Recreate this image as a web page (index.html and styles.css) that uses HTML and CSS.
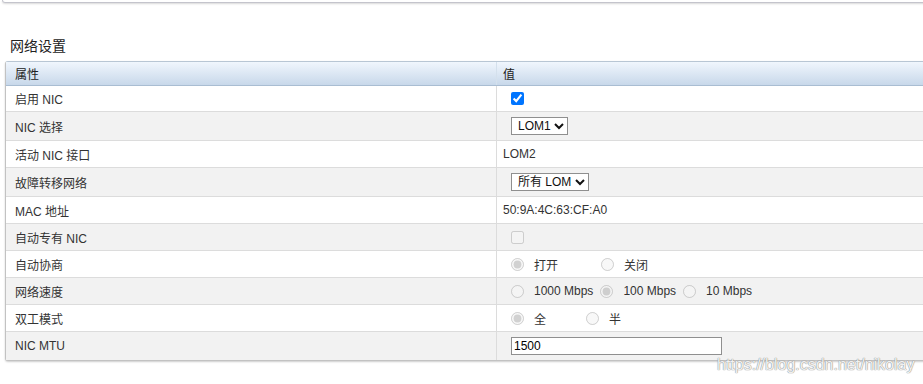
FILE: index.html
```html
<!DOCTYPE html>
<html lang="zh-CN">
<head>
    <meta charset="UTF-8">
    <title>网络设置</title>
    <link rel="stylesheet" href="styles.css">
</head>
<body>

<div class="top-panel"></div>

<h3 class="section-title">网络设置</h3>

<div class="grid">
    <div class="grid-head">
        <div class="cell">属性</div>
        <div class="cell">值</div>
    </div>
    <div class="grid-row first">
        <div class="cell">启用 NIC</div>
        <div class="cell"><input type="checkbox" class="check" checked></div>
    </div>
    <div class="grid-row tall alt">
        <div class="cell">NIC 选择</div>
        <div class="cell">
            <select class="pick pick-sm">
                <option>LOM1</option>
                <option>LOM2</option>
            </select>
        </div>
    </div>
    <div class="grid-row">
        <div class="cell">活动 NIC 接口</div>
        <div class="cell">LOM2</div>
    </div>
    <div class="grid-row tall alt">
        <div class="cell">故障转移网络</div>
        <div class="cell">
            <select class="pick pick-md">
                <option>所有 LOM</option>
                <option>无</option>
            </select>
        </div>
    </div>
    <div class="grid-row">
        <div class="cell">MAC 地址</div>
        <div class="cell">50:9A:4C:63:CF:A0</div>
    </div>
    <div class="grid-row alt">
        <div class="cell">自动专有 NIC</div>
        <div class="cell"><input type="checkbox" class="check" disabled></div>
    </div>
    <div class="grid-row">
        <div class="cell">自动协商</div>
        <div class="cell choices">
            <label class="opt opt-90"><input type="radio" name="auto" checked disabled>打开</label>
            <label class="opt"><input type="radio" name="auto" disabled>关闭</label>
        </div>
    </div>
    <div class="grid-row alt">
        <div class="cell">网络速度</div>
        <div class="cell choices">
            <label class="opt"><input type="radio" name="speed" disabled>1000 Mbps</label>
            <label class="opt"><input type="radio" name="speed" checked disabled>100 Mbps</label>
            <label class="opt"><input type="radio" name="speed" disabled>10 Mbps</label>
        </div>
    </div>
    <div class="grid-row">
        <div class="cell">双工模式</div>
        <div class="cell choices">
            <label class="opt opt-75"><input type="radio" name="duplex" checked disabled>全</label>
            <label class="opt"><input type="radio" name="duplex" disabled>半</label>
        </div>
    </div>
    <div class="grid-row tall alt last">
        <div class="cell">NIC MTU</div>
        <div class="cell"><input type="text" class="text-field" value="1500"></div>
    </div>
</div>

<div class="watermark">https://blog.csdn.net/nikolay</div>

</body>
</html>
```

FILE: styles.css
```css
body {
    margin: 0;
    font-family: "Liberation Sans", Arial, "Noto Sans CJK SC", sans-serif;
    font-size: 12px;
    color: #333;
    background-color: white;
    overflow: hidden;
    position: relative;
    height: 384px;
}
.top-panel {
    margin-left: 2px;
    margin-right: -10px;
    height: 2px;
    border: 1px solid #c4c4cc;
    border-top: none;
    border-radius: 0 0 0 3px;
    box-shadow: 0 1px 2px rgba(0, 0, 0, 0.15);
}
.section-title {
    margin: 35px 0 7px 10px;
    font-size: 14px;
    line-height: 16px;
    font-weight: normal;
    color: #222;
}
.grid {
    margin-left: 5px;
    width: 940px;
    border: 1px solid #c2c2c2;
    border-top-color: #b8c6d4;
    border-radius: 3px 0 0 3px;
    box-shadow: 0 1px 2px rgba(0, 0, 0, 0.2);
    background-color: white;
}
.grid-head,
.grid-row {
    display: grid;
    grid-template-columns: 491px 1fr;
    box-sizing: border-box;
}
.grid-head {
    height: 24px;
    background: linear-gradient(#f0f6fd, #c8d8ea);
    border-bottom: 1px solid #a9bdd2;
    color: #222;
}
.grid-row {
    height: 27px;
    border-bottom: 1px solid #dcdcdc;
}
.grid-row.first {
    height: 26px;
}
.grid-row.tall {
    height: 29px;
}
.grid-row.alt {
    background-color: #f2f2f2;
}
.grid-row.last {
    border-bottom: none;
    height: 28px;
}
.cell {
    display: flex;
    align-items: center;
    padding-left: 9px;
    white-space: nowrap;
}
.cell:first-child {
    border-right: 1px solid #dcdcdc;
}
.grid-head .cell:first-child {
    border-right-color: #d4e0ec;
}
.cell + .cell {
    padding-left: 6px;
}
.cell.choices {
    padding-left: 14px;
}
.check {
    margin: 0 0 0 8px;
    width: 13px;
    height: 13px;
}
.pick {
    margin-left: 8px;
    height: 18px;
    padding: 0 0 0 2px;
    border: 1px solid #8f8f8f;
    border-radius: 0;
    background-color: white;
    font-family: "Liberation Sans", Arial, "Noto Sans CJK SC", sans-serif;
    font-size: 12px;
    color: #111;
}
.pick-sm {
    width: 57px;
}
.pick-md {
    width: 78px;
}
.opt {
    display: inline-flex;
    align-items: center;
    margin-right: 7px;
}
.opt input {
    margin: 0 10px 0 0;
    width: 13px;
    height: 13px;
}
.opt-90 {
    width: 90px;
    margin-right: 0;
}
.opt-75 {
    width: 75px;
    margin-right: 0;
}
.text-field {
    margin-left: 8px;
    width: 211px;
    height: 18px;
    box-sizing: border-box;
    padding: 0 2px;
    border: 1px solid #8f8f8f;
    font-family: "Liberation Sans", Arial, sans-serif;
    font-size: 12px;
    color: #000;
}
.watermark {
    position: absolute;
    left: 717px;
    top: 356px;
    font-family: "Liberation Sans", Arial, sans-serif;
    font-size: 16px;
    color: rgba(255, 255, 255, 0.9);
    text-shadow: 0 0 1px #888, 0 0 1px #888;
}
```
